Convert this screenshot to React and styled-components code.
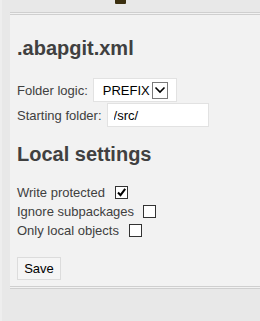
import React from "react";
import styled, { createGlobalStyle } from "styled-components";

const Global = createGlobalStyle`
  html, body { margin: 0; padding: 0; background: #e8e8e8; }
  body { font-family: "Liberation Sans", Arial, sans-serif; font-size: 13px; color: #404040; }
`;

const Page = styled.div`
  min-height: 321px;
  box-sizing: border-box;
  border-left: 2px solid #eeeeee;
  padding-left: 8px;
  background: #e8e8e8;
`;

const Header = styled.div`
  height: 12px;
  display: flex;
  align-items: flex-start;
`;

const Mark = styled.span`
  display: block;
  margin-left: 105px;
  width: 11px;
  height: 4px;
  background: #3b2f10;
  border-radius: 0 0 1px 1px;
`;

const Panel = styled.div`
  background: #f2f2f2;
  border-top: 3px double #cfcfcf;
  border-bottom: 3px double #cfcfcf;
  padding: 22px 7px 6px;
`;

const Title = styled.h1`
  margin: ${(p) => p.$mt || 0}px 0 ${(p) => p.$mb}px;
  font-size: 20px;
  line-height: 23px;
  font-weight: bold;
  color: #404040;
`;

const FieldRow = styled.div`
  display: flex;
  align-items: center;
  gap: 5px;
  height: 24px;
  margin-bottom: ${(p) => p.$mb || 0}px;
  line-height: 15px;
`;

const SelectBox = styled.div`
  display: flex;
  align-items: center;
  box-sizing: border-box;
  width: 84px;
  height: 24px;
  background: #fff;
  border: 1px solid #e2e2e2;
  padding-left: 9px;
`;

const NativeSelect = styled.select`
  appearance: none;
  -webkit-appearance: none;
  border: 0;
  background: transparent;
  padding: 0;
  margin: 0;
  width: 49px;
  font: 13px "Liberation Sans", Arial, sans-serif;
  color: #000;
  outline: none;
`;

const ArrowBox = styled.span`
  display: flex;
  align-items: center;
  justify-content: center;
  box-sizing: border-box;
  width: 16px;
  height: 17px;
  border: 1px solid #7a7a7a;
  background: #fff;
`;

const TextInput = styled.input`
  box-sizing: border-box;
  width: 102px;
  height: 24px;
  margin: 0;
  border: 1px solid #e2e2e2;
  background: #fff;
  padding: 0 6px;
  font: 13px "Liberation Sans", Arial, sans-serif;
  color: #000;
  outline: none;
`;

const CheckRow = styled.label`
  display: flex;
  align-items: center;
  height: 19px;
  line-height: 15px;
`;

const Box = styled.span`
  display: inline-flex;
  align-items: center;
  justify-content: center;
  box-sizing: border-box;
  width: 13px;
  height: 13px;
  margin-left: ${(p) => p.$ml}px;
  border: 1px solid #333;
  background: #fff;
`;

const Actions = styled.div`
  margin-top: 17px;
  display: flex;
`;

const Button = styled.button`
  box-sizing: border-box;
  height: 23px;
  width: 44px;
  padding: 0;
  margin: 0;
  background: #f5f5f5;
  border: 1px solid #dcdcdc;
  font: 13px "Liberation Sans", Arial, sans-serif;
  color: #000;
`;

const Check = ({ checked, ml }) => (
  <Box $ml={ml}>
    {checked && (
      <svg width="11" height="11" viewBox="0 0 11 11">
        <path d="M2 5.5 L4.5 8.2 L9.2 1.8" fill="none" stroke="#000" strokeWidth="2" />
      </svg>
    )}
  </Box>
);

export default function App() {
  return (
    <>
      <Global />
      <Page>
        <Header>
          <Mark />
        </Header>
        <Panel>
          <Title $mb={18}>.abapgit.xml</Title>
          <FieldRow $mb={1}>
            <span>Folder logic:</span>
            <SelectBox>
              <NativeSelect defaultValue="PREFIX">
                <option>PREFIX</option>
                <option>FULL</option>
              </NativeSelect>
              <ArrowBox>
                <svg width="12" height="8" viewBox="0 0 12 8">
                  <path d="M1.5 1.5 L6 6 L10.5 1.5" fill="none" stroke="#000" strokeWidth="1.6" />
                </svg>
              </ArrowBox>
            </SelectBox>
          </FieldRow>
          <FieldRow>
            <span>Starting folder:</span>
            <TextInput defaultValue="/src/" />
          </FieldRow>
          <Title $mt={16} $mb={17}>Local settings</Title>
          <CheckRow>
            Write protected
            <Check checked ml={10} />
          </CheckRow>
          <CheckRow>
            Ignore subpackages
            <Check ml={9} />
          </CheckRow>
          <CheckRow>
            Only local objects
            <Check ml={10} />
          </CheckRow>
          <Actions>
            <Button>Save</Button>
          </Actions>
        </Panel>
      </Page>
    </>
  );
}
